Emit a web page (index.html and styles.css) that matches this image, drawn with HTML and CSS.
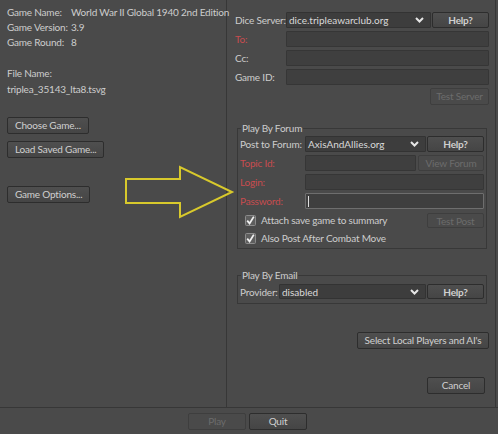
FILE: index.html
```html
<!DOCTYPE html>
<html>
<head>
<meta charset="utf-8">
<link rel="stylesheet" href="styles.css">
</head>
<body>
<div class="window">
  <div class="main">
    <div class="left">
      <div class="info">
        <span>Game Name:</span><span>World War II Global 1940 2nd Edition</span>
        <span>Game Version:</span><span>3.9</span>
        <span>Game Round:</span><span>8</span>
      </div>
      <div class="file">
        <div>File Name:</div>
        <div>triplea_35143_lta8.tsvg</div>
      </div>
      <div class="left-buttons">
        <button class="btn">Choose Game...</button>
        <button class="btn">Load Saved Game...</button>
        <button class="btn options">Game Options...</button>
      </div>
    </div>
    <div class="right">
      <div class="server">
        <div class="row">
          <span class="label">Dice Server:</span>
          <div class="combo"><span>dice.tripleawarclub.org</span><svg class="chev" width="9" height="6" viewBox="0 0 9 6"><path d="M1 1 L4.5 4.5 L8 1" fill="none" stroke="#e6e6e6" stroke-width="2"/></svg></div>
          <button class="btn help">Help?</button>
        </div>
        <div class="row">
          <span class="label red">To:</span>
          <div class="field"></div>
        </div>
        <div class="row">
          <span class="label">Cc:</span>
          <div class="field"></div>
        </div>
        <div class="row">
          <span class="label">Game ID:</span>
          <div class="field"></div>
        </div>
        <div class="row end">
          <button class="btn disabled test-server">Test Server</button>
        </div>
      </div>

      <fieldset class="group forum">
        <legend>Play By Forum</legend>
        <div class="frows">
          <div class="row">
            <span class="flabel">Post to Forum:</span>
            <div class="combo"><span>AxisAndAllies.org</span><svg class="chev" width="9" height="6" viewBox="0 0 9 6"><path d="M1 1 L4.5 4.5 L8 1" fill="none" stroke="#e6e6e6" stroke-width="2"/></svg></div>
            <button class="btn help">Help?</button>
          </div>
          <div class="row">
            <span class="flabel red">Topic Id:</span>
            <div class="field"></div>
            <button class="btn disabled view-forum">View Forum</button>
          </div>
          <div class="row">
            <span class="flabel red">Login:</span>
            <div class="field"></div>
          </div>
          <div class="row">
            <span class="flabel red">Password:</span>
            <div class="field focus"><span class="caret"></span></div>
          </div>
          <div class="row">
            <svg class="check" width="11" height="11" viewBox="0 0 11 11"><rect x="0.5" y="0.5" width="10" height="10" rx="1" fill="#5e5e5e" stroke="#8c8c8c"/><path d="M2.2 5.6 L4.6 8.4 L8.8 1.6" fill="none" stroke="#f0f0f0" stroke-width="1.8"/></svg>
            <span class="ctext">Attach save game to summary</span>
            <button class="btn disabled test-post">Test Post</button>
          </div>
          <div class="row last">
            <svg class="check" width="11" height="11" viewBox="0 0 11 11"><rect x="0.5" y="0.5" width="10" height="10" rx="1" fill="#5e5e5e" stroke="#8c8c8c"/><path d="M2.2 5.6 L4.6 8.4 L8.8 1.6" fill="none" stroke="#f0f0f0" stroke-width="1.8"/></svg>
            <span class="ctext">Also Post After Combat Move</span>
          </div>
        </div>
      </fieldset>

      <fieldset class="group email">
        <legend>Play By Email</legend>
        <div class="row prow">
          <span class="plabel">Provider:</span>
          <div class="combo"><span>disabled</span><svg class="chev" width="9" height="6" viewBox="0 0 9 6"><path d="M1 1 L4.5 4.5 L8 1" fill="none" stroke="#e6e6e6" stroke-width="2"/></svg></div>
          <button class="btn help">Help?</button>
        </div>
      </fieldset>

      <div class="row end select-row">
        <button class="btn select-local">Select Local Players and AI's</button>
      </div>
      <div class="row end cancel-row">
        <button class="btn cancel">Cancel</button>
      </div>
    </div>
  </div>
  <div class="bottom">
    <button class="btn disabled bottom-btn">Play</button>
    <button class="btn bottom-btn">Quit</button>
  </div>
  <svg class="arrow" width="498" height="434" viewBox="0 0 498 434">
    <polygon points="126,179 180,179 180,167 232,192 180,217 180,203 126,203" fill="none" stroke="#d8c92c" stroke-width="2" stroke-linejoin="miter"/>
  </svg>
</div>
</body>
</html>
```

FILE: styles.css
```css
html, body {
  margin: 0;
  padding: 0;
  background: #4a4a4a;
}

body {
  font-family: Lato, "Open Sans", sans-serif;
  font-size: 10px;
  letter-spacing: -0.2px;
  color: #cdcdcd;
}

.window {
  position: relative;
  width: 498px;
  height: 434px;
  display: flex;
  flex-direction: column;
  overflow: hidden;
}

.main {
  display: flex;
  height: 408px;
  box-sizing: border-box;
  border-bottom: 1px solid #373737;
}

.left {
  width: 227px;
  box-sizing: border-box;
  border-right: 1px solid #373737;
  padding: 5px 0 0 7px;
}

.info {
  display: grid;
  grid-template-columns: 64px auto;
  line-height: 15px;
  white-space: nowrap;
}

.file {
  margin-top: 15px;
  line-height: 16px;
}

.left-buttons {
  margin-top: 20px;
  display: flex;
  flex-direction: column;
  align-items: flex-start;
  gap: 7px;
}

.left-buttons .options {
  margin-top: 21px;
}

.btn {
  height: 17px;
  box-sizing: border-box;
  padding: 0 7px;
  border: 1px solid #2d2d2d;
  border-radius: 2px;
  background: linear-gradient(#4f4f4f, #454545);
  color: #d0d0d0;
  font-family: inherit;
  font-size: 10px;
  letter-spacing: -0.2px;
  line-height: 15px;
  white-space: nowrap;
  text-align: center;
}

.btn.disabled {
  background: #4a4a4a;
  border-color: #3e3e3e;
  color: #6c6c6c;
}

.btn.help {
  width: 57px;
  font-weight: bold;
  padding: 0;
  height: 16px;
  flex: none;
}

.right {
  width: 269px;
  box-sizing: border-box;
  border-right: 1px solid #373737;
  padding: 12px 6px 0 8px;
}

.server {
  display: flex;
  flex-direction: column;
  gap: 3px;
}

.row {
  display: flex;
  align-items: center;
  height: 16px;
  white-space: nowrap;
}

.row.end {
  justify-content: flex-end;
}

.label {
  width: 51px;
  flex: none;
}

.red {
  color: #c84c4f;
}

.field {
  flex: 1;
  height: 16px;
  box-sizing: border-box;
  background: #3f3f3f;
  border: 1px solid #363636;
  border-radius: 1px;
  display: flex;
  align-items: center;
}

.field.focus {
  border-color: #6e6e6e;
}

.caret {
  width: 1px;
  height: 11px;
  margin-left: 2px;
  background: #e0e0e0;
}

.combo {
  flex: 1;
  height: 16px;
  box-sizing: border-box;
  margin-right: 1px;
  background: #3d3d3d;
  border: 1px solid #333333;
  border-radius: 1px;
  display: flex;
  align-items: center;
  justify-content: space-between;
  padding: 0 6px 0 2px;
  color: #dadada;
  font-size: 10px;
  letter-spacing: 0;
}

.chev {
  flex: none;
}

.test-server {
  width: 59px;
  padding: 0;
}

.group {
  margin: 18px 2px 0;
  padding: 2px 2px 2px;
  border: 1px solid #383838;
  min-width: 0;
}

.group legend {
  padding: 0 1px;
  margin-left: 1px;
  line-height: 12px;
}

.frows {
  display: flex;
  flex-direction: column;
  gap: 3px;
}

.frows .last {
  margin-top: -1px;
}

.flabel {
  width: 65px;
  flex: none;
}

.view-forum {
  width: 66px;
  padding: 0;
  margin-left: 2px;
  height: 16px;
  flex: none;
}

.check {
  flex: none;
  margin-left: 5px;
}

.ctext {
  margin-left: 5px;
}

.test-post {
  width: 57px;
  padding: 0;
  margin-left: auto;
  height: 15px;
}

.email {
  margin-top: 20px;
  padding: 3px 2px 4px;
}

.prow {
  height: 15px;
}

.prow .combo,
.prow .btn.help {
  height: 15px;
}

.plabel {
  width: 39px;
  flex: none;
}

.select-row {
  margin-top: 28px;
}

.select-local {
  width: 132px;
  padding: 0;
}

.cancel-row {
  margin-top: 29px;
  padding-right: 4px;
}

.cancel {
  width: 58px;
  padding: 0;
}

.bottom {
  flex: 1;
  display: flex;
  justify-content: center;
  align-items: flex-start;
  gap: 3px;
  padding: 5px 3px 0 0;
}

.bottom-btn {
  width: 58px;
  padding: 0;
}

.arrow {
  position: absolute;
  left: 0;
  top: 0;
  pointer-events: none;
}
```
